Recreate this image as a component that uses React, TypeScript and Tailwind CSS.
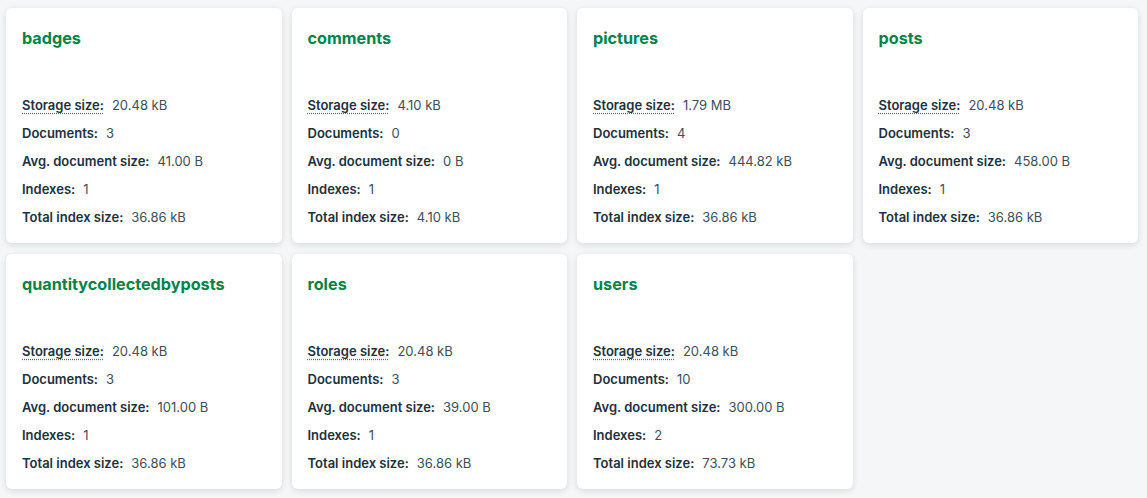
const collections = [
  { name: "badges", storage: "20.48 kB", docs: "3", avg: "41.00 B", indexes: "1", indexSize: "36.86 kB" },
  { name: "comments", storage: "4.10 kB", docs: "0", avg: "0 B", indexes: "1", indexSize: "4.10 kB" },
  { name: "pictures", storage: "1.79 MB", docs: "4", avg: "444.82 kB", indexes: "1", indexSize: "36.86 kB" },
  { name: "posts", storage: "20.48 kB", docs: "3", avg: "458.00 B", indexes: "1", indexSize: "36.86 kB" },
  { name: "quantitycollectedbyposts", storage: "20.48 kB", docs: "3", avg: "101.00 B", indexes: "1", indexSize: "36.86 kB" },
  { name: "roles", storage: "20.48 kB", docs: "3", avg: "39.00 B", indexes: "1", indexSize: "36.86 kB" },
  { name: "users", storage: "20.48 kB", docs: "10", avg: "300.00 B", indexes: "2", indexSize: "73.73 kB" },
];

type Collection = (typeof collections)[number];

function Stat({ label, value, dotted }: { label: string; value: string; dotted?: boolean }) {
  return (
    <div className="flex h-[28px] items-center text-[13px]">
      <span
        className={
          "font-semibold text-[#21313c] " +
          (dotted ? "underline decoration-dotted decoration-[#5c6c75] underline-offset-[3px]" : "")
        }
      >
        {label}
      </span>
      <span className="ml-[8px] text-[#3d4f58]">{value}</span>
    </div>
  );
}

function CollectionCard({ c }: { c: Collection }) {
  return (
    <div className="flex h-[235px] flex-col rounded-[6px] bg-white px-4 pt-[18px] pb-[11px] shadow-[0_2px_6px_rgba(6,22,33,0.12)]">
      <h3 className="h-[24px] text-[16.2px] font-bold leading-[24px] text-[#00844b]">{c.name}</h3>
      <div className="mt-[42px] flex flex-col">
        <Stat label="Storage size:" value={c.storage} dotted />
        <Stat label="Documents:" value={c.docs} />
        <Stat label="Avg. document size:" value={c.avg} />
        <Stat label="Indexes:" value={c.indexes} />
        <Stat label="Total index size:" value={c.indexSize} />
      </div>
    </div>
  );
}

export default function App() {
  return (
    <div className="min-h-[498px] bg-[#f5f6f7] pt-[8px] pl-[6px] pr-[9px] font-['Inter',sans-serif]">
      <div className="grid grid-cols-4 gap-x-[10px] gap-y-[11px]">
        {collections.map((c) => (
          <CollectionCard key={c.name} c={c} />
        ))}
      </div>
    </div>
  );
}
